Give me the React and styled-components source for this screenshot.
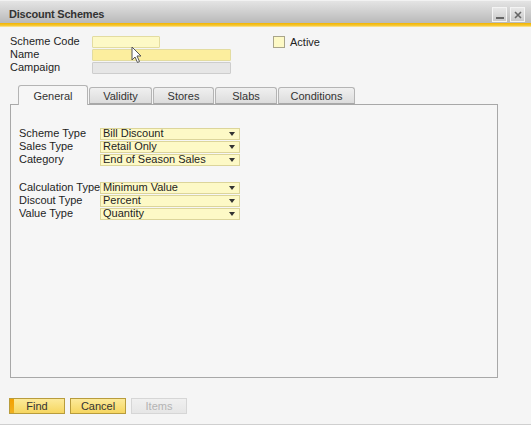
import React from "react";
import styled, { createGlobalStyle } from "styled-components";

const GlobalStyle = createGlobalStyle`
  html, body {
    margin: 0;
    padding: 0;
    background: #f4f4f4;
  }
  body {
    font-family: "Liberation Sans", Arial, sans-serif;
    font-size: 11px;
    color: #222;
  }
`;

const Window = styled.div`
  position: relative;
  width: 531px;
  height: 425px;
  box-sizing: border-box;
  display: flex;
  flex-direction: column;
  background: #f5f5f5;
  border-bottom: 1px solid #cfcfcf;
  overflow: hidden;
`;

const TitleBar = styled.div`
  height: 22px;
  display: flex;
  align-items: center;
  justify-content: space-between;
  padding: 0 6px 0 9px;
  background: linear-gradient(#e4e4e4, #cfcfcf 50%, #b9b9b9);
  border-top: 1px solid #f2f2f2;
`;

const Title = styled.div`
  font-size: 11px;
  font-weight: bold;
  color: #333;
  letter-spacing: -0.2px;
  padding-top: 3px;
`;

const WinButtons = styled.div`
  display: flex;
  gap: 3px;
  padding-top: 5px;
`;

const WinButton = styled.div`
  width: 15px;
  height: 15px;
  box-sizing: border-box;
  border: 1px solid #f4f4f4;
  background: linear-gradient(#e8e8e8, #c9c9c9);
  display: flex;
  align-items: center;
  justify-content: center;
`;

const Accent = styled.div`
  height: 4px;
  background: linear-gradient(#f2b400, #f6c630 60%, #fbe9a8);
`;

const Content = styled.div`
  flex: 1;
  display: flex;
  flex-direction: column;
  padding: 8px 0 0 10px;
`;

const Header = styled.div`
  display: flex;
`;

const HeaderFields = styled.div`
  width: 263px;
  display: flex;
  flex-direction: column;
`;

const Row = styled.div`
  display: flex;
  align-items: center;
  height: 13px;
`;

const Label = styled.div`
  width: ${(p) => p.$w}px;
  white-space: nowrap;
  overflow: hidden;
  line-height: 13px;
  color: #1e1e1e;
`;

const Input = styled.div`
  width: ${(p) => p.$w}px;
  height: 12px;
  box-sizing: border-box;
  border: 1px solid ${(p) => (p.$tone === "gray" ? "#cdcdcd" : "#e3dca0")};
  border-radius: 1px;
  background: ${(p) =>
    p.$tone === "strong" ? "#fcee9e" : p.$tone === "gray" ? "#e6e6e6" : "#fdf9c6"};
`;

const CheckWrap = styled.div`
  display: flex;
  align-items: center;
  gap: 5px;
  height: 13px;
`;

const CheckBox = styled.div`
  width: 12px;
  height: 12px;
  box-sizing: border-box;
  border: 1px solid #a9a58a;
  background: #fdf9c6;
`;

const TabBar = styled.div`
  display: flex;
  align-items: flex-end;
  height: 19px;
  margin-top: 11px;
  padding-left: 8px;
  position: relative;
  z-index: 1;
`;

const Tab = styled.div`
  width: ${(p) => p.$w}px;
  height: ${(p) => (p.$active ? 20 : 17)}px;
  box-sizing: border-box;
  display: flex;
  align-items: center;
  justify-content: center;
  border: 1px solid #b4b4b4;
  border-bottom: ${(p) => (p.$active ? "none" : "1px solid #a8a8a8")};
  border-radius: 3px 3px 0 0;
  margin-bottom: ${(p) => (p.$active ? -1 : 0)}px;
  background: ${(p) =>
    p.$active ? "#f6f6f6" : "linear-gradient(#f0f0f0, #dcdcdc)"};
  color: #333;
  margin-right: 1px;
  padding-top: ${(p) => (p.$active ? 1 : 0)}px;
`;

const Panel = styled.div`
  width: 488px;
  height: 274px;
  box-sizing: border-box;
  border: 1px solid #a8a8a8;
  background: #f6f6f6;
  padding: 22px 0 0 8px;
  display: flex;
  flex-direction: column;
`;

const Group = styled.div`
  display: flex;
  flex-direction: column;
  margin-bottom: 15px;
`;

const ComboBox = styled.div`
  width: 140px;
  height: 12px;
  box-sizing: border-box;
  border: 1px solid #dcd59a;
  background: #fdf9c6;
  display: flex;
  align-items: center;
  justify-content: space-between;
  padding: 0 4px 0 2px;
  line-height: 11px;
  color: #1e1e1e;
`;

const Arrow = styled.span`
  width: 0;
  height: 0;
  border-left: 3px solid transparent;
  border-right: 3px solid transparent;
  border-top: 4px solid #333;
`;

const Footer = styled.div`
  display: flex;
  gap: 5px;
  margin-top: 20px;
  margin-left: -1px;
`;

const Button = styled.div`
  position: relative;
  width: 56px;
  height: 16px;
  box-sizing: border-box;
  display: flex;
  align-items: center;
  justify-content: center;
  border: 1px solid ${(p) => (p.$disabled ? "#d6d6d6" : "#b89c3c")};
  background: ${(p) =>
    p.$disabled ? "linear-gradient(#f0f0f0, #e6e6e6)" : "linear-gradient(#fcea9a, #f6d660)"};
  color: ${(p) => (p.$disabled ? "#b4b4b4" : "#333")};
  overflow: hidden;
  &::before {
    content: "";
    display: ${(p) => (p.$focus ? "block" : "none")};
    position: absolute;
    left: 0;
    top: 0;
    bottom: 0;
    width: 4px;
    background: linear-gradient(#f3a000, #f0b020);
  }
`;

const Cursor = styled.svg`
  position: absolute;
  left: 131px;
  top: 46px;
`;

const headerRows = [
  { label: "Scheme Code", w: 68, tone: "light" },
  { label: "Name", w: 139, tone: "strong" },
  { label: "Campaign", w: 139, tone: "gray" },
];

const tabs = [
  { name: "General", w: 70, active: true },
  { name: "Validity", w: 63 },
  { name: "Stores", w: 61 },
  { name: "Slabs", w: 62 },
  { name: "Conditions", w: 77 },
];

const groups = [
  [
    ["Scheme Type", "Bill Discount"],
    ["Sales Type", "Retail Only"],
    ["Category", "End of Season Sales"],
  ],
  [
    ["Calculation Type", "Minimum Value"],
    ["Discout Type", "Percent"],
    ["Value Type", "Quantity"],
  ],
];

export default function App() {
  return (
    <>
      <GlobalStyle />
      <Window>
        <TitleBar>
          <Title>Discount Schemes</Title>
          <WinButtons>
            <WinButton>
              <svg width="10" height="10" viewBox="0 0 10 10">
                <rect x="1" y="7" width="8" height="2" fill="#666" />
              </svg>
            </WinButton>
            <WinButton>
              <svg width="10" height="10" viewBox="0 0 10 10">
                <path d="M2 2 L8 8 M8 2 L2 8" stroke="#666" strokeWidth="1.6" />
              </svg>
            </WinButton>
          </WinButtons>
        </TitleBar>
        <Accent />
        <Content>
          <Header>
            <HeaderFields>
              {headerRows.map((r) => (
                <Row key={r.label}>
                  <Label $w={82}>{r.label}</Label>
                  <Input $w={r.w} $tone={r.tone} />
                </Row>
              ))}
            </HeaderFields>
            <CheckWrap>
              <CheckBox />
              <span>Active</span>
            </CheckWrap>
          </Header>

          <TabBar>
            {tabs.map((t) => (
              <Tab key={t.name} $w={t.w} $active={t.active}>
                {t.name}
              </Tab>
            ))}
          </TabBar>
          <Panel>
            {groups.map((g, i) => (
              <Group key={i}>
                {g.map(([label, value]) => (
                  <Row key={label}>
                    <Label $w={81}>{label}</Label>
                    <ComboBox>
                      <span>{value}</span>
                      <Arrow />
                    </ComboBox>
                  </Row>
                ))}
              </Group>
            ))}
          </Panel>

          <Footer>
            <Button $focus>Find</Button>
            <Button>Cancel</Button>
            <Button $disabled>Items</Button>
          </Footer>
        </Content>
        <Cursor width="12" height="18" viewBox="0 0 12 18">
          <path
            d="M1 1 L1 14 L4 11 L6.5 16.5 L8.5 15.5 L6 10 L10 10 Z"
            fill="#fff"
            stroke="#555"
            strokeWidth="1"
            strokeLinejoin="round"
          />
        </Cursor>
      </Window>
    </>
  );
}
